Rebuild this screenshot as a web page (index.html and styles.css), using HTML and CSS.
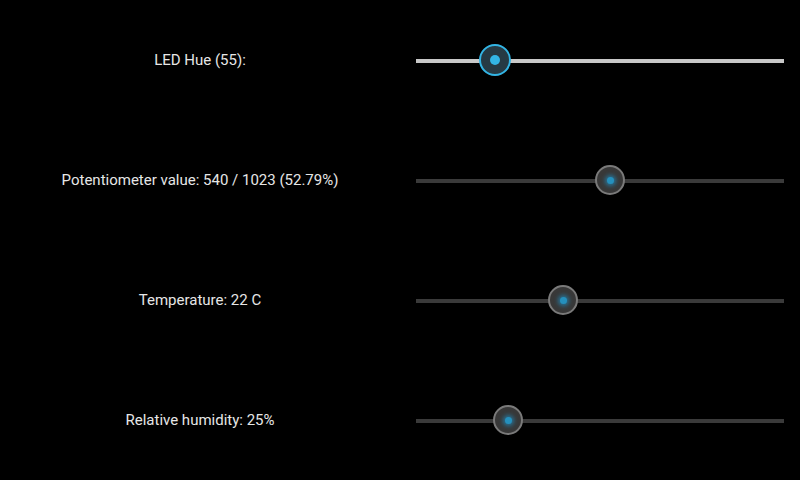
FILE: index.html
```html
<!DOCTYPE html>
<html>
<head>
<meta charset="utf-8">
<link rel="stylesheet" href="styles.css">
</head>
<body>
<div class="panel">
  <div class="row">
    <div class="label">LED Hue (55):</div>
    <div class="slider active"><div class="track"></div><div class="knob" style="left:21.57%"><div class="dot"></div></div></div>
  </div>
  <div class="row">
    <div class="label">Potentiometer value: 540 / 1023 (52.79%)</div>
    <div class="slider"><div class="track"></div><div class="knob" style="left:52.79%"><div class="dot"></div></div></div>
  </div>
  <div class="row">
    <div class="label">Temperature: 22 C</div>
    <div class="slider"><div class="track"></div><div class="knob" style="left:40%"><div class="dot"></div></div></div>
  </div>
  <div class="row">
    <div class="label">Relative humidity: 25%</div>
    <div class="slider"><div class="track"></div><div class="knob" style="left:25%"><div class="dot"></div></div></div>
  </div>
</div>
</body>
</html>
```
FILE: styles.css
```css
html, body {
  margin: 0;
  padding: 0;
  background: #000;
}
body {
  width: 800px;
  height: 480px;
  overflow: hidden;
  font-family: Roboto, "Liberation Sans", sans-serif;
  font-size: 15px;
  color: #e6e6e6;
}
.panel {
  display: grid;
  grid-template-rows: repeat(4, 120px);
}
.row {
  display: grid;
  grid-template-columns: 400px 368px;
  column-gap: 16px;
  align-items: center;
}
.label {
  text-align: center;
  line-height: 20px;
}
.slider {
  position: relative;
  height: 32px;
  padding-top: 1px;
  display: flex;
  align-items: center;
}
.track {
  width: 100%;
  height: 4px;
  background: #3a3a3a;
}
.active .track {
  background: #c8c8c8;
}
.knob {
  position: absolute;
  top: 50%;
  width: 26px;
  height: 26px;
  margin-left: -15px;
  margin-top: -15px;
  border-radius: 50%;
  border: 2px solid #7a7a7a;
  background: #383838;
  display: flex;
  align-items: center;
  justify-content: center;
}
.dot {
  width: 7px;
  height: 7px;
  border-radius: 50%;
  background: #2590bd;
  box-shadow: 0 0 4px 2px rgba(35, 130, 175, 0.8);
}
.active .knob {
  width: 28px;
  height: 28px;
  margin-left: -16px;
  margin-top: -16px;
  border-color: #33b5e5;
  background: #263a44;
}
.active .dot {
  width: 10px;
  height: 10px;
  background: #33b5e5;
  box-shadow: none;
}
```
